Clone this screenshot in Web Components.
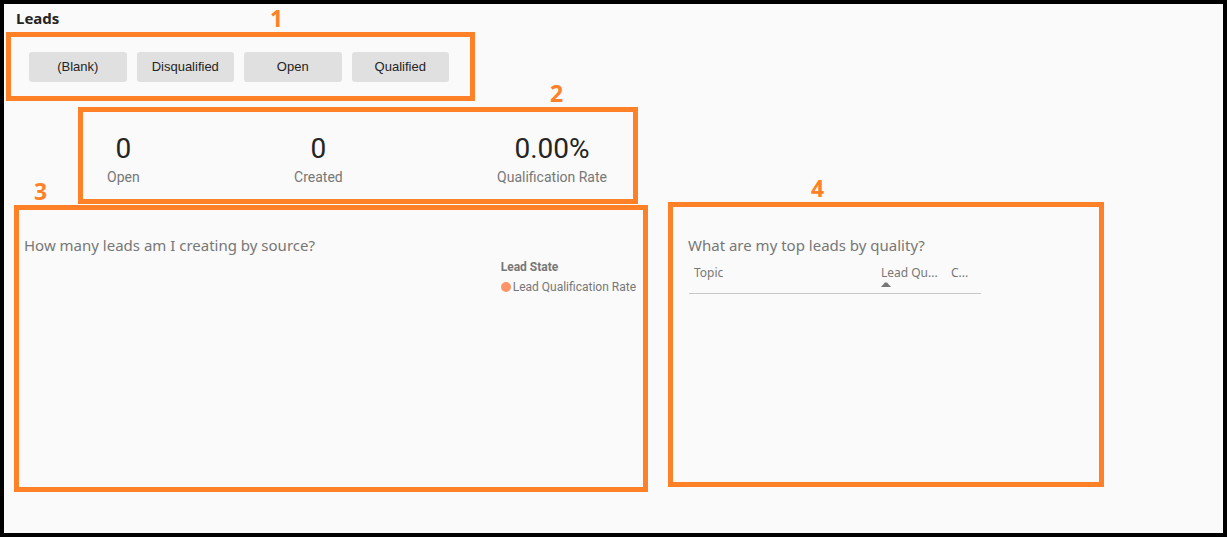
<!DOCTYPE html>
<html lang="en">
<head>
<meta charset="utf-8">
<meta name="viewport" content="width=device-width, initial-scale=1">
<title>Leads</title>
<style>
html { background: #000; }
body { margin: 0; font-family: "Noto Sans", "Open Sans", sans-serif; color: #252423; }
</style>
</head>
<body>
<leads-dashboard></leads-dashboard>

<script>
const define = (name, html) => {
  const template = document.createElement("template");
  template.innerHTML = html;
  customElements.define(name, class extends HTMLElement {
    constructor() {
      super();
      this.attachShadow({ mode: "open" }).append(template.content.cloneNode(true));
    }
  });
};

// Orange frame with its number sitting above the top edge
define("callout-box", `
<style>
  :host { display: block; position: relative; box-sizing: border-box; border: 5px solid #ff8127; }
  .number {
    position: absolute; bottom: 100%; left: var(--number-left, 0); margin-bottom: 7px;
    color: #ff8127; font-size: 23px; font-weight: 700; line-height: 24px;
  }
</style>
<span class="number"><slot name="number"></slot></span>
<slot></slot>`);

define("filter-button", `
<style>
  :host { display: block; }
  button {
    display: block; width: 100%; height: 30px; padding: 0; border: 0; border-radius: 3px;
    background: #e0e0e0; color: #252423; font: 13px/30px "Liberation Sans", Arial, sans-serif;
  }
</style>
<button type="button"><slot></slot></button>`);

define("state-slicer", `
<style>
  :host { display: grid; grid-template-columns: repeat(4, 1fr); gap: 10px; padding: 15px 21px 14px 18px; }
</style>
<filter-button>(Blank)</filter-button>
<filter-button>Disqualified</filter-button>
<filter-button>Open</filter-button>
<filter-button>Qualified</filter-button>`);

define("kpi-value", `
<style>
  :host { display: block; text-align: center; font-family: Roboto, sans-serif; }
  .value { font-size: 28px; line-height: 36px; color: #252423; }
  .label { font-size: 14px; line-height: 20px; color: #777; }
</style>
<div class="value"><slot name="value"></slot></div>
<div class="label"><slot></slot></div>`);

define("kpi-row", `
<style>
  :host { display: flex; justify-content: space-between; padding: 19px 26px 12px 24px; }
</style>
<kpi-value><span slot="value">0</span>Open</kpi-value>
<kpi-value><span slot="value">0</span>Created</kpi-value>
<kpi-value><span slot="value">0.00%</span>Qualification Rate</kpi-value>`);

define("source-chart", `
<style>
  :host { display: block; min-height: 277px; }
  h2 { margin: 0; padding: 23px 5px 0; font-size: 15px; font-weight: 400; line-height: 24px; color: #777; }
  .legend {
    width: max-content; margin-left: auto; padding-right: 7px;
    font: 12px/20px Roboto, sans-serif; color: #777;
  }
  .legend strong { display: block; font-weight: 700; }
  .item { display: flex; align-items: center; gap: 2px; }
  .dot { width: 10px; height: 10px; border-radius: 50%; background: #fd9567; }
</style>
<h2>How many leads am I creating by source?</h2>
<div class="legend">
  <strong>Lead State</strong>
  <div class="item"><span class="dot"></span><span>Lead Qualification Rate</span></div>
</div>`);

define("top-leads", `
<style>
  :host { display: block; min-height: 275px; }
  h2 { margin: 0; padding: 26px 15px 0; font-size: 15px; font-weight: 400; line-height: 24px; color: #777; }
  .grid { padding: 4px 118px 0 16px; }
  table { width: 100%; table-layout: fixed; border-collapse: collapse; }
  th {
    height: 32px; padding: 0 0 0 5px; border-bottom: 1px solid #c8c8c8; text-align: left; vertical-align: top;
    white-space: nowrap; font-size: 12px; font-weight: 400; line-height: 24px; color: #777;
  }
  .topic { width: 64%; }
  .quality { width: 24%; }
  svg { display: block; margin-top: -3px; }
</style>
<h2>What are my top leads by quality?</h2>
<div class="grid">
  <table>
    <colgroup><col class="topic"><col class="quality"><col></colgroup>
    <thead>
      <tr>
        <th scope="col">Topic</th>
        <th scope="col" aria-sort="ascending">Lead Qu...
          <svg width="10" height="5" viewBox="0 0 10 5" aria-hidden="true"><path d="M0 5 4 0.5H6L10 5Z" fill="#777"/></svg>
        </th>
        <th scope="col">C...</th>
      </tr>
    </thead>
  </table>
</div>`);

define("leads-dashboard", `
<style>
  :host {
    display: grid; grid-template-columns: 644fr 436fr 99fr; column-gap: 20px; align-items: start;
    box-sizing: border-box; min-height: 100vh; border: 4px solid #000; background: #fafafa;
  }
  h1 { margin: 0; padding: 2px 12px; font-size: 15px; font-weight: 700; line-height: 24px; }
  .slicer { margin: 0 173px 6px 2px; --number-left: 259px; }
  .kpis { margin: 0 10px 1px 74px; --number-left: 467px; }
  .sources { margin-left: 10px; --number-left: 15px; }
  .top { margin-top: 198px; --number-left: 138px; }
</style>
<section>
  <h1>Leads</h1>
  <callout-box class="slicer"><span slot="number">1</span><state-slicer></state-slicer></callout-box>
  <callout-box class="kpis"><span slot="number">2</span><kpi-row></kpi-row></callout-box>
  <callout-box class="sources"><span slot="number">3</span><source-chart></source-chart></callout-box>
</section>
<callout-box class="top"><span slot="number">4</span><top-leads></top-leads></callout-box>`);
</script>
</body>
</html>
